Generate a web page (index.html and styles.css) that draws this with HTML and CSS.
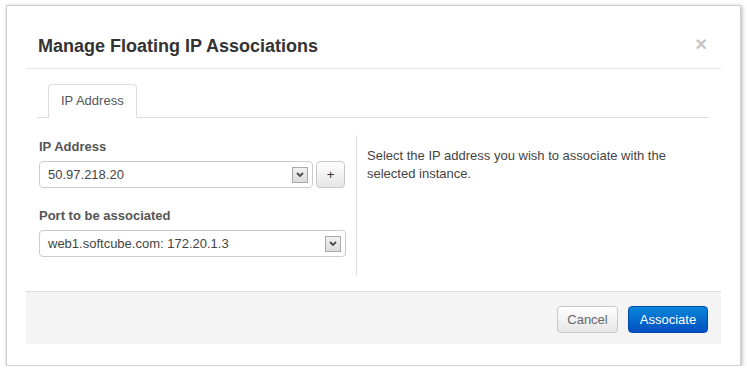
FILE: index.html
```html
<!DOCTYPE html>
<html lang="en">
<head>
<meta charset="utf-8">
<title>Manage Floating IP Associations</title>
<link rel="stylesheet" href="styles.css">
</head>
<body>
<div class="modal">
  <div class="modal-header">
    <h3 class="modal-title">Manage Floating IP Associations</h3>
    <span class="close">&times;</span>
  </div>
  <div class="modal-body">
    <ul class="nav-tabs">
      <li class="tab active">IP Address</li>
    </ul>
    <div class="tab-content">
      <div class="left-col">
        <div class="form-group">
          <label class="label">IP Address</label>
          <div class="input-row">
            <div class="select select-ip">
              <span class="select-text">50.97.218.20</span>
              <span class="select-arrow"><svg width="8" height="5" viewBox="0 0 8 5"><path d="M1 1 L4 4 L7 1" fill="none" stroke="#4a4a4a" stroke-width="1.8"/></svg></span>
            </div>
            <button class="btn btn-plus">+</button>
          </div>
        </div>
        <div class="form-group last">
          <label class="label">Port to be associated</label>
          <div class="select select-port">
            <span class="select-text">web1.softcube.com: 172.20.1.3</span>
            <span class="select-arrow"><svg width="8" height="5" viewBox="0 0 8 5"><path d="M1 1 L4 4 L7 1" fill="none" stroke="#4a4a4a" stroke-width="1.8"/></svg></span>
          </div>
        </div>
      </div>
      <div class="right-col">
        <p class="help">Select the IP address you wish to associate with the selected instance.</p>
      </div>
    </div>
  </div>
  <div class="modal-footer">
    <button class="btn btn-cancel">Cancel</button>
    <button class="btn btn-primary">Associate</button>
  </div>
</div>
</body>
</html>
```
FILE: styles.css
```css
* { box-sizing: border-box; }
html, body { margin: 0; padding: 0; background: #fff; }
body {
  font-family: "Liberation Sans", Arial, sans-serif;
  font-size: 13px;
  color: #333;
}
.modal {
  margin: 5px 0 0 6px;
  width: 735px;
  height: 361px;
  background: #fff;
  border: 1px solid #cfcfcf;
  box-shadow: 1px 1px 4px rgba(0,0,0,0.3);
  padding: 0 19px 19px;
}
.modal-header {
  display: flex;
  align-items: center;
  justify-content: space-between;
  padding: 28px 14px 10px 12px;
  border-bottom: 1px solid #e5e5e5;
}
.modal-title {
  margin: 0;
  font-size: 18px;
  line-height: 24px;
  font-weight: bold;
  color: #333;
}
.close {
  font-size: 20px;
  font-weight: bold;
  line-height: 20px;
  color: #c4c4c4;
  margin-top: -4px;
}
.modal-body {
  padding: 15px 12px 15px;
}
.nav-tabs {
  list-style: none;
  margin: 0;
  padding: 0 0 0 10px;
  display: flex;
  border-bottom: 1px solid #ddd;
}
.tab {
  padding: 6px 12px;
  line-height: 20px;
  font-size: 13px;
  color: #555;
  border: 1px solid #ddd;
  border-bottom-color: #fff;
  border-radius: 4px 4px 0 0;
  background: #fff;
  margin-bottom: -1px;
}
.tab-content {
  display: flex;
  margin-top: 17px;
}
.left-col {
  width: 319px;
  padding: 2px 11px 19px 1px;
  border-right: 1px solid #e0e0e0;
}
.right-col {
  flex: 1;
  padding: 12px 0 0 10px;
}
.help {
  margin: 0;
  line-height: 18px;
  color: #444;
}
.form-group { margin-bottom: 18px; }
.form-group.last { margin-bottom: 0; }
.label {
  display: block;
  font-weight: bold;
  line-height: 20px;
  color: #555;
  margin-bottom: 4px;
}
.input-row {
  display: flex;
  gap: 3px;
}
.select {
  display: flex;
  align-items: center;
  height: 27px;
  border: 1px solid #ccc;
  border-radius: 4px;
  padding: 0 4px 0 8px;
  background: #fff;
  color: #444;
}
.select-ip { width: 274px; }
.select-port { width: 307px; }
.select-text { flex: 1; line-height: 18px; }
.select-arrow {
  width: 16px;
  height: 16px;
  border: 1px solid #a9a9a9;
  background: linear-gradient(#f1f1f1, #dcdcdc);
  display: flex;
  align-items: center;
  justify-content: center;
}
.btn {
  font-family: "Liberation Sans", Arial, sans-serif;
  font-size: 13px;
  height: 27px;
  line-height: 18px;
  padding: 0 10px;
  border-radius: 4px;
  border: 1px solid #ccc;
  background: linear-gradient(#ffffff, #e6e6e6);
  color: #333;
  cursor: pointer;
}
.btn-plus {
  width: 29px;
  padding: 0;
  border-color: #c8c8c8;
}
.modal-footer {
  display: flex;
  justify-content: flex-end;
  gap: 10px;
  padding: 14px 13px 11px;
  background: #f4f4f4;
  border-top: 1px solid #ddd;
}
.btn-cancel {
  width: 61px;
  padding: 0;
  color: #666;
  border-color: #c8c8c8;
}
.btn-primary {
  width: 80px;
  padding: 0;
  color: #fff;
  background: linear-gradient(#0a86d8, #0050c0);
  border-color: #0049b0;
}
```
